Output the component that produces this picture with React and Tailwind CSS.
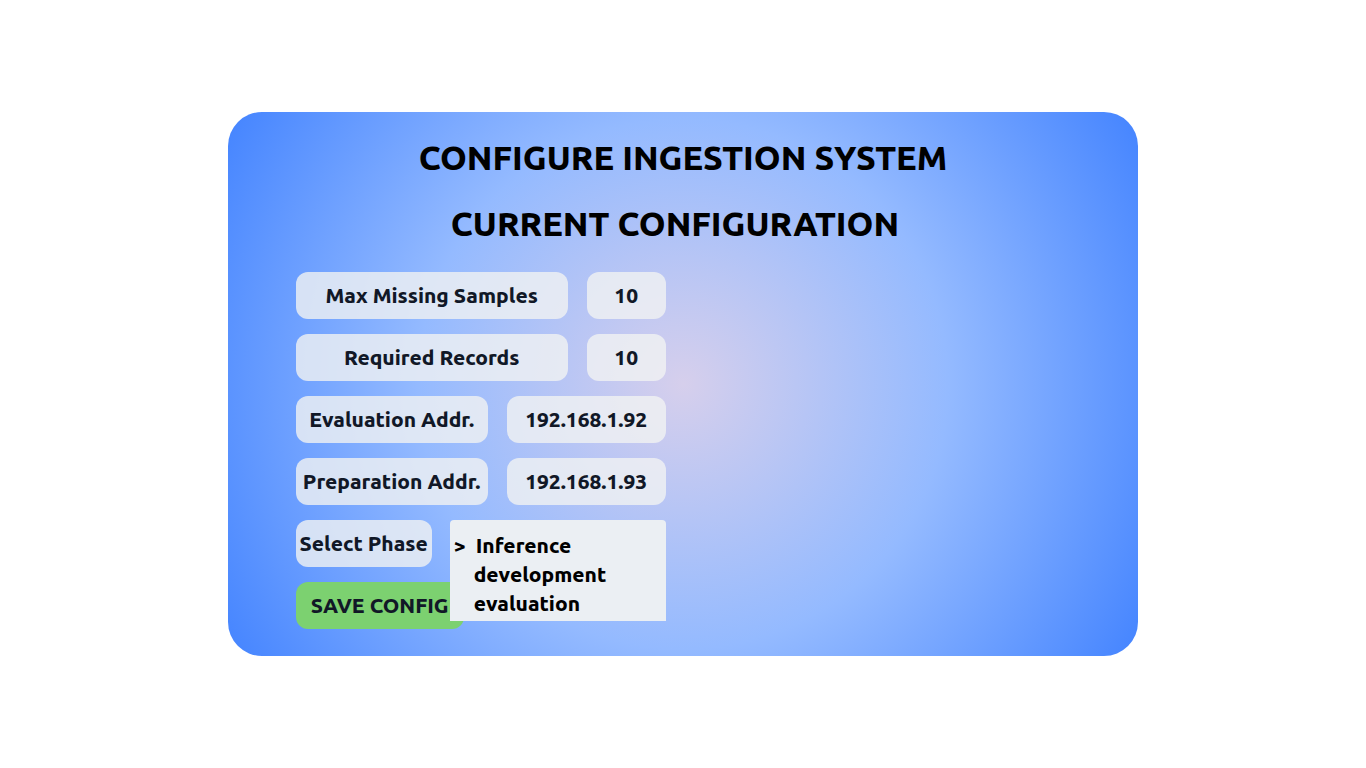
import { useState } from "react";

const tile =
  "flex h-[47px] items-center justify-center rounded-xl bg-[#f1f3f3]/80 pb-0.5 text-center leading-7 font-extrabold text-[#111827] whitespace-nowrap";

const fields = [
  { id: "max-missing", label: "Max Missing Samples", value: "10", columns: "grid-cols-[272px_79px]" },
  { id: "required-records", label: "Required Records", value: "10", columns: "grid-cols-[272px_79px]" },
  { id: "evaluation-address", label: "Evaluation Addr.", value: "192.168.1.92", columns: "grid-cols-[192px_159px]" },
  { id: "preparation-address", label: "Preparation Addr.", value: "192.168.1.93", columns: "grid-cols-[192px_159px]" },
];

const phases = ["Inference", "development", "evaluation"];

function Field({ id, label, value, columns }) {
  return (
    <div className={`grid justify-between ${columns}`}>
      <label htmlFor={id} className={tile}>{label}</label>
      <input id={id} type="text" defaultValue={value} className={`${tile} w-full min-w-0 outline-none`} />
    </div>
  );
}

function PhasePicker() {
  const [phase, setPhase] = useState("Inference");
  return (
    <div className="flex justify-between">
      <span id="phase-label" className={`${tile} w-[136px]`}>Select Phase</span>
      <div className="relative w-[216px]">
        <div
          role="radiogroup"
          aria-labelledby="phase-label"
          className="absolute inset-x-0 top-0 z-10 rounded-t bg-[#ebeff3] pt-[11px] pb-[3px] pl-1 font-extrabold text-black"
        >
          {phases.map((name) => (
            <label key={name} className="flex h-[29px] items-center">
              <input
                type="radio"
                name="phase"
                value={name}
                checked={phase === name}
                onChange={() => setPhase(name)}
                className="flex w-5 appearance-none items-center outline-none checked:w-[22px] checked:before:content-['>']"
              />
              {name}
            </label>
          ))}
        </div>
      </div>
    </div>
  );
}

export default function App() {
  return (
    <div className="flex min-h-screen items-center justify-center bg-white font-['Ubuntu','Noto_Sans',sans-serif]">
      <main className="w-2/3 rounded-[34px] bg-[radial-gradient(circle_at_center,#d6cfec_0%,#94baff_50%,#4484ff_100%)] px-[68px] pt-[26px] pb-[27px]">
        <h1 className="text-center text-[34px] leading-[38px] font-extrabold text-black">CONFIGURE INGESTION SYSTEM</h1>
        <h2 className="mt-7 mb-[30px] pr-4 text-center text-[34px] leading-[38px] font-extrabold text-black">CURRENT CONFIGURATION</h2>
        <form className="flex w-[370px] flex-col gap-[15px] text-[21px]" onSubmit={(e) => e.preventDefault()}>
          {fields.map((field) => (
            <Field key={field.id} {...field} />
          ))}
          <PhasePicker />
          <button type="submit" className="h-[47px] w-[168px] rounded-xl bg-[#7cd170] font-extrabold text-[#111827]">
            SAVE CONFIG
          </button>
        </form>
      </main>
    </div>
  );
}
